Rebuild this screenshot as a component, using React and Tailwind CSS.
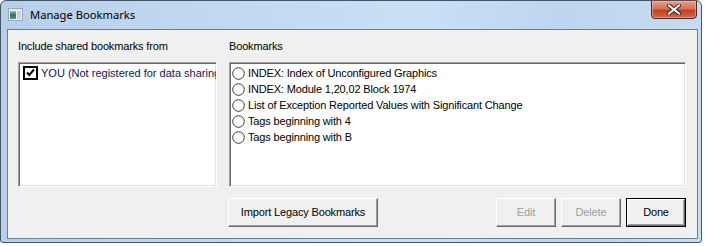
import React from 'react';

const bookmarks = [
    'INDEX: Index of Unconfigured Graphics',
    'INDEX: Module 1,20,02 Block 1974',
    'List of Exception Reported Values with Significant Change',
    'Tags beginning with 4',
    'Tags beginning with B',
];

function Radio() {
    return (
        <svg width="13" height="13" viewBox="0 0 13 13" className="shrink-0">
            <circle cx="6.5" cy="6.5" r="5.8" fill="#fff" stroke="#3a3a3a" strokeWidth="1" />
        </svg>
    );
}

function CheckBox() {
    return (
        <svg width="15" height="14" viewBox="0 0 15 14" className="shrink-0">
            <rect x="0" y="0" width="15" height="14" fill="#000" />
            <rect x="2" y="2" width="11" height="10" fill="#fff" />
            <path d="M4 6.5 L6.3 9 L11 3.5" fill="none" stroke="#000" strokeWidth="2" />
        </svg>
    );
}

function WinButton({ children, disabled, isDefault, className = '' }) {
    const bevel = 'border border-t-white border-l-white border-r-[#696969] border-b-[#696969] shadow-[inset_-1px_-1px_0_#a0a0a0]';
    if (isDefault) {
        return (
            <div className={`h-[29px] border border-black ${className}`}>
                <div className={`h-full w-full flex items-center justify-center bg-[#f0f0f0] ${bevel}`}>
                    {children}
                </div>
            </div>
        );
    }
    return (
        <div className={`h-[29px] flex items-center justify-center bg-[#f0f0f0] ${bevel} ${disabled ? 'text-[#a0a0a0]' : 'text-black'} ${className}`}>
            {children}
        </div>
    );
}

function AppIcon() {
    return (
        <svg width="15" height="13" viewBox="0 0 15 13">
            <rect x="0.5" y="0.5" width="14" height="12" fill="#e8edf1" stroke="#9aa8b4" />
            <defs>
                <linearGradient id="ic" x1="0" y1="0" x2="0" y2="1">
                    <stop offset="0" stopColor="#9cc4b4" />
                    <stop offset="0.5" stopColor="#2e6d68" />
                    <stop offset="1" stopColor="#5a9a8a" />
                </linearGradient>
            </defs>
            <rect x="2" y="3" width="6" height="8" fill="url(#ic)" />
            <rect x="9" y="3" width="4" height="8" fill="#c9d3db" />
        </svg>
    );
}

export default function App() {
    return (
        <div className="w-[705px] h-[246px] bg-white font-['Liberation_Sans',sans-serif] text-[11px] tracking-[-0.15px]">
            <div className="w-[702px] h-[243px] flex flex-col border border-[#4a5360] rounded-t-[6px] rounded-b-[3px] bg-[linear-gradient(to_right,#b7d0ea,#c2d9f1_35%,#c9e0f7_60%,#bdd5ee_80%,#c6dcf2)] overflow-hidden">
                <div className="h-[28px] shrink-0 flex items-start">
                    <div className="ml-[7px] mt-[7px]">
                        <AppIcon />
                    </div>
                    <div className="ml-[7px] mt-[6px] font-['Noto_Sans',sans-serif] text-[11.2px] tracking-normal leading-[16px] text-black">
                        Manage Bookmarks
                    </div>
                    <div className="ml-auto mr-[4px] -mt-px w-[46px] h-[19px] rounded-b-[4px] border border-[#5a2118] bg-[linear-gradient(to_bottom,#e3a18f,#d6715a_45%,#c23f22_55%,#d2694b)] flex items-center justify-center shadow-[inset_0_0_0_1px_rgba(255,200,180,0.5)]">
                        <svg width="14" height="11" viewBox="0 0 14 11">
                            <path d="M2 1.5 L12 9.5 M12 1.5 L2 9.5" stroke="#3b1d17" strokeWidth="4" strokeLinecap="square" />
                            <path d="M2 1.5 L12 9.5 M12 1.5 L2 9.5" stroke="#ffffff" strokeWidth="2" strokeLinecap="square" />
                        </svg>
                    </div>
                </div>
                <div className="ml-[6px] mr-[3px] mb-[3px] flex-1 border border-[#6e7d8f] bg-[#f0f0f0] pl-[10px] pt-[10px] flex gap-[12px]">
                    <div className="w-[199px] flex flex-col">
                        <div className="h-[13px] leading-[13px] text-black">Include shared bookmarks from</div>
                        <div className="mt-[9px] h-[125px] bg-white border border-t-[#a0a0a0] border-l-[#a0a0a0] border-r-white border-b-white shadow-[inset_1px_1px_0_#696969,inset_-1px_-1px_0_#e3e3e3] pl-[4px] pt-[2px] overflow-hidden">
                            <div className="flex items-center gap-[3px] whitespace-nowrap h-[16px]">
                                <CheckBox />
                                <span className="text-[#0e1650] tracking-normal">YOU (Not registered for data sharing)</span>
                            </div>
                        </div>
                    </div>
                    <div className="w-[457px] flex flex-col">
                        <div className="h-[13px] leading-[13px] text-black">Bookmarks</div>
                        <div className="mt-[9px] h-[125px] bg-white border border-t-[#a0a0a0] border-l-[#a0a0a0] border-r-white border-b-white shadow-[inset_1px_1px_0_#696969,inset_-1px_-1px_0_#e3e3e3] pl-[2px] pt-[2px] overflow-hidden">
                            {bookmarks.map((b) => (
                                <div key={b} className="flex items-center gap-[3px] h-[16px] whitespace-nowrap text-black">
                                    <Radio />
                                    <span>{b}</span>
                                </div>
                            ))}
                        </div>
                        <div className="mt-[11px] flex items-center gap-[5px] -ml-px">
                            <WinButton className="w-[150px]">Import Legacy Bookmarks</WinButton>
                            <div className="flex-1" />
                            <WinButton className="w-[60px]" disabled>Edit</WinButton>
                            <WinButton className="w-[60px]" disabled>Delete</WinButton>
                            <WinButton className="w-[60px]" isDefault>Done</WinButton>
                        </div>
                    </div>
                </div>
            </div>
        </div>
    );
}
